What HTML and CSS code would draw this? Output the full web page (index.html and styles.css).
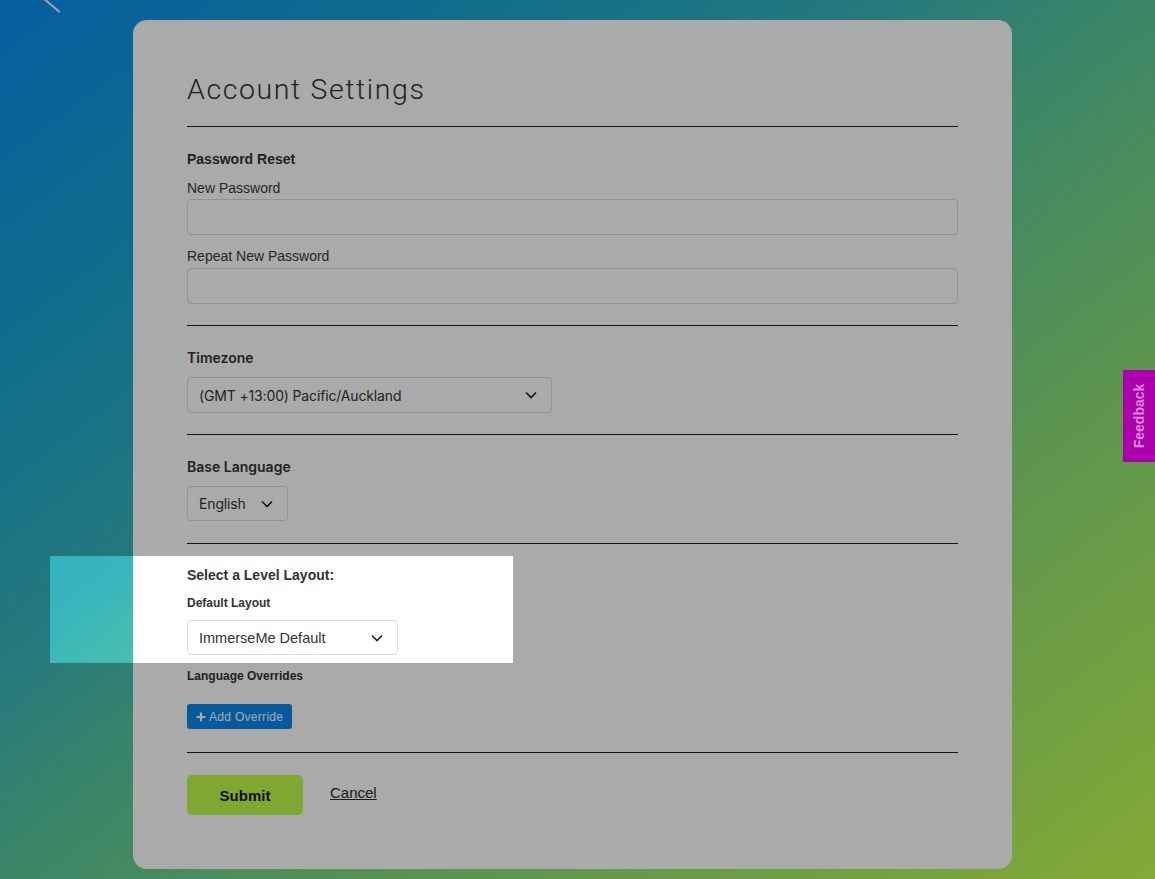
FILE: index.html
```html
<!DOCTYPE html>
<html lang="en">
<head>
  <meta charset="UTF-8">
  <title>Account Settings</title>
  <link rel="stylesheet" href="styles.css">
</head>
<body>
  <span class="deco-line"></span>
  <main class="card">
    <h1>Account Settings</h1>
    <hr class="hr-title">
    <section class="section">
      <h3 class="section-title">Password Reset</h3>
      <label class="field-label" for="newPassword">New Password</label>
      <input type="password" id="newPassword" class="text-input first">
      <label class="field-label second" for="repeatPassword">Repeat New Password</label>
      <input type="password" id="repeatPassword" class="text-input">
    </section>
    <hr>
    <section class="section">
      <h3 class="section-title sys">Timezone</h3>
      <div class="select select-tz">
        <span>(GMT +13:00) Pacific/Auckland</span>
        <svg width="12" height="8" viewBox="0 0 12 8"><path d="M1 1.5 L6 6.5 L11 1.5" fill="none" stroke="#222" stroke-width="1.6"/></svg>
      </div>
    </section>
    <hr>
    <section class="section">
      <h3 class="section-title sys">Base Language</h3>
      <div class="select select-lang">
        <span>English</span>
        <svg width="12" height="8" viewBox="0 0 12 8"><path d="M1 1.5 L6 6.5 L11 1.5" fill="none" stroke="#222" stroke-width="1.6"/></svg>
      </div>
    </section>
    <hr class="hr-layout">
    <section class="section">
      <h3 class="section-title">Select a Level Layout:</h3>
      <div class="sub-label">Default Layout</div>
      <div class="select select-layout">
        <span>ImmerseMe Default</span>
        <svg width="12" height="8" viewBox="0 0 12 8"><path d="M1 1.5 L6 6.5 L11 1.5" fill="none" stroke="#222" stroke-width="1.6"/></svg>
      </div>
      <div class="sub-label overrides">Language Overrides</div>
      <button type="button" class="add-btn">
        <svg width="10" height="10" viewBox="0 0 10 10"><path d="M5 0.5 V9.5 M0.5 5 H9.5" stroke="#fff" stroke-width="2.2"/></svg>
        Add Override
      </button>
    </section>
    <hr class="hr-actions">
    <div class="actions">
      <button type="submit" class="submit-btn">Submit</button>
      <a class="cancel-link" href="#">Cancel</a>
    </div>
  </main>
  <div class="spotlight"></div>
  <div class="feedback-tab"><span>Feedback</span></div>
</body>
</html>
```

FILE: styles.css
```css
body {
  margin: 0;
  height: 100vh;
  overflow: hidden;
  font-family: 'Liberation Sans', Arial, sans-serif;
  color: #333;
  background: linear-gradient(to bottom right,
    rgb(8,142,240) 0%,
    rgb(22,165,210) 20%,
    rgb(57,182,188) 38%,
    rgb(90,202,155) 50%,
    rgb(128,218,128) 65%,
    rgb(198,255,80) 100%);
  position: relative;
}
.deco-line {
  position: absolute;
  left: 43px;
  top: -3px;
  width: 22px;
  height: 2px;
  background: rgba(255,255,255,0.95);
  transform: rotate(40deg);
  transform-origin: left center;
}
.card {
  width: 879px;
  height: 849px;
  box-sizing: border-box;
  margin: 20px 0 0 133px;
  background: #fff;
  border-radius: 14px;
  padding: 51px 54px 54px;
}
h1 {
  margin: 0;
  font-family: Roboto, 'Liberation Sans', sans-serif;
  font-weight: 300;
  font-size: 28.5px;
  line-height: 38px;
  letter-spacing: 1.6px;
  color: #333;
}
hr {
  border: none;
  border-top: 1px solid #1e1e1e;
  margin: 21px 0 22px;
}
.hr-title {
  margin-top: 17px;
}
.hr-layout {
  margin-top: 22px;
  margin-bottom: 21px;
}
.hr-actions {
  margin-top: 23px;
}
.section-title {
  margin: 0;
  font-size: 14px;
  line-height: 20px;
  font-weight: 700;
  color: #333;
}
.section-title.sys {
  font-family: Inter, 'Liberation Sans', sans-serif;
  font-weight: 600;
}
.field-label {
  display: block;
  margin-top: 9px;
  font-size: 14px;
  line-height: 20px;
  color: #3a3a3a;
}
.field-label.second {
  margin-top: 11px;
}
.text-input {
  display: block;
  width: 100%;
  box-sizing: border-box;
  height: 36px;
  margin-top: 2px;
  border: 1px solid #dcdcdc;
  border-radius: 4px;
  background: #fff;
  outline: none;
}
.text-input.first {
  margin-top: 1px;
}
.select {
  display: flex;
  align-items: center;
  justify-content: space-between;
  box-sizing: border-box;
  margin-top: 9px;
  height: 36px;
  padding: 0 14px 0 11px;
  border: 1px solid #dcdcdc;
  border-radius: 4px;
  background: #fff;
  font-family: Inter, 'Liberation Sans', sans-serif;
  font-size: 14px;
  letter-spacing: -0.15px;
  color: #333;
}
.select-tz {
  width: 365px;
}
.select-lang {
  width: 101px;
  height: 35px;
}
.select-layout {
  width: 211px;
  height: 35px;
  margin-top: 8px;
  font-family: 'Liberation Sans', Arial, sans-serif;
  font-size: 14.5px;
  letter-spacing: 0;
}
.sub-label {
  margin-top: 9px;
  font-size: 12px;
  line-height: 18px;
  font-weight: 700;
  color: #333;
}
.sub-label.overrides {
  margin-top: 12px;
}
.add-btn {
  display: flex;
  align-items: center;
  gap: 3px;
  margin-top: 19px;
  height: 25px;
  padding: 0 9px;
  border: none;
  border-radius: 3px;
  background: rgb(8,135,235);
  color: #fff;
  font-family: 'Liberation Sans', Arial, sans-serif;
  font-size: 12px;
  letter-spacing: 0.3px;
}
.actions {
  display: flex;
  align-items: center;
  gap: 27px;
}
.submit-btn {
  width: 116px;
  height: 40px;
  border: none;
  border-radius: 5px;
  background: rgb(190,252,74);
  color: #1a1a1a;
  font-family: 'Liberation Sans', Arial, sans-serif;
  font-size: 15px;
  font-weight: 700;
}
.cancel-link {
  color: #2a2a2a;
  font-size: 15px;
  text-decoration: underline;
  margin-top: -5px;
}
.spotlight {
  position: absolute;
  left: 50px;
  top: 556px;
  width: 463px;
  height: 107px;
  box-shadow: 0 0 0 2000px rgba(0,0,0,0.333);
  pointer-events: none;
  z-index: 5;
}
.feedback-tab {
  position: absolute;
  right: 0;
  top: 370px;
  width: 32px;
  height: 92px;
  background: #ac00ac;
  display: flex;
  align-items: center;
  justify-content: center;
  z-index: 10;
}
.feedback-tab span {
  transform: rotate(-90deg);
  font-family: 'Liberation Sans', Arial, sans-serif;
  font-weight: 700;
  font-size: 14px;
  color: rgba(255,255,255,0.55);
  white-space: nowrap;
}
```
